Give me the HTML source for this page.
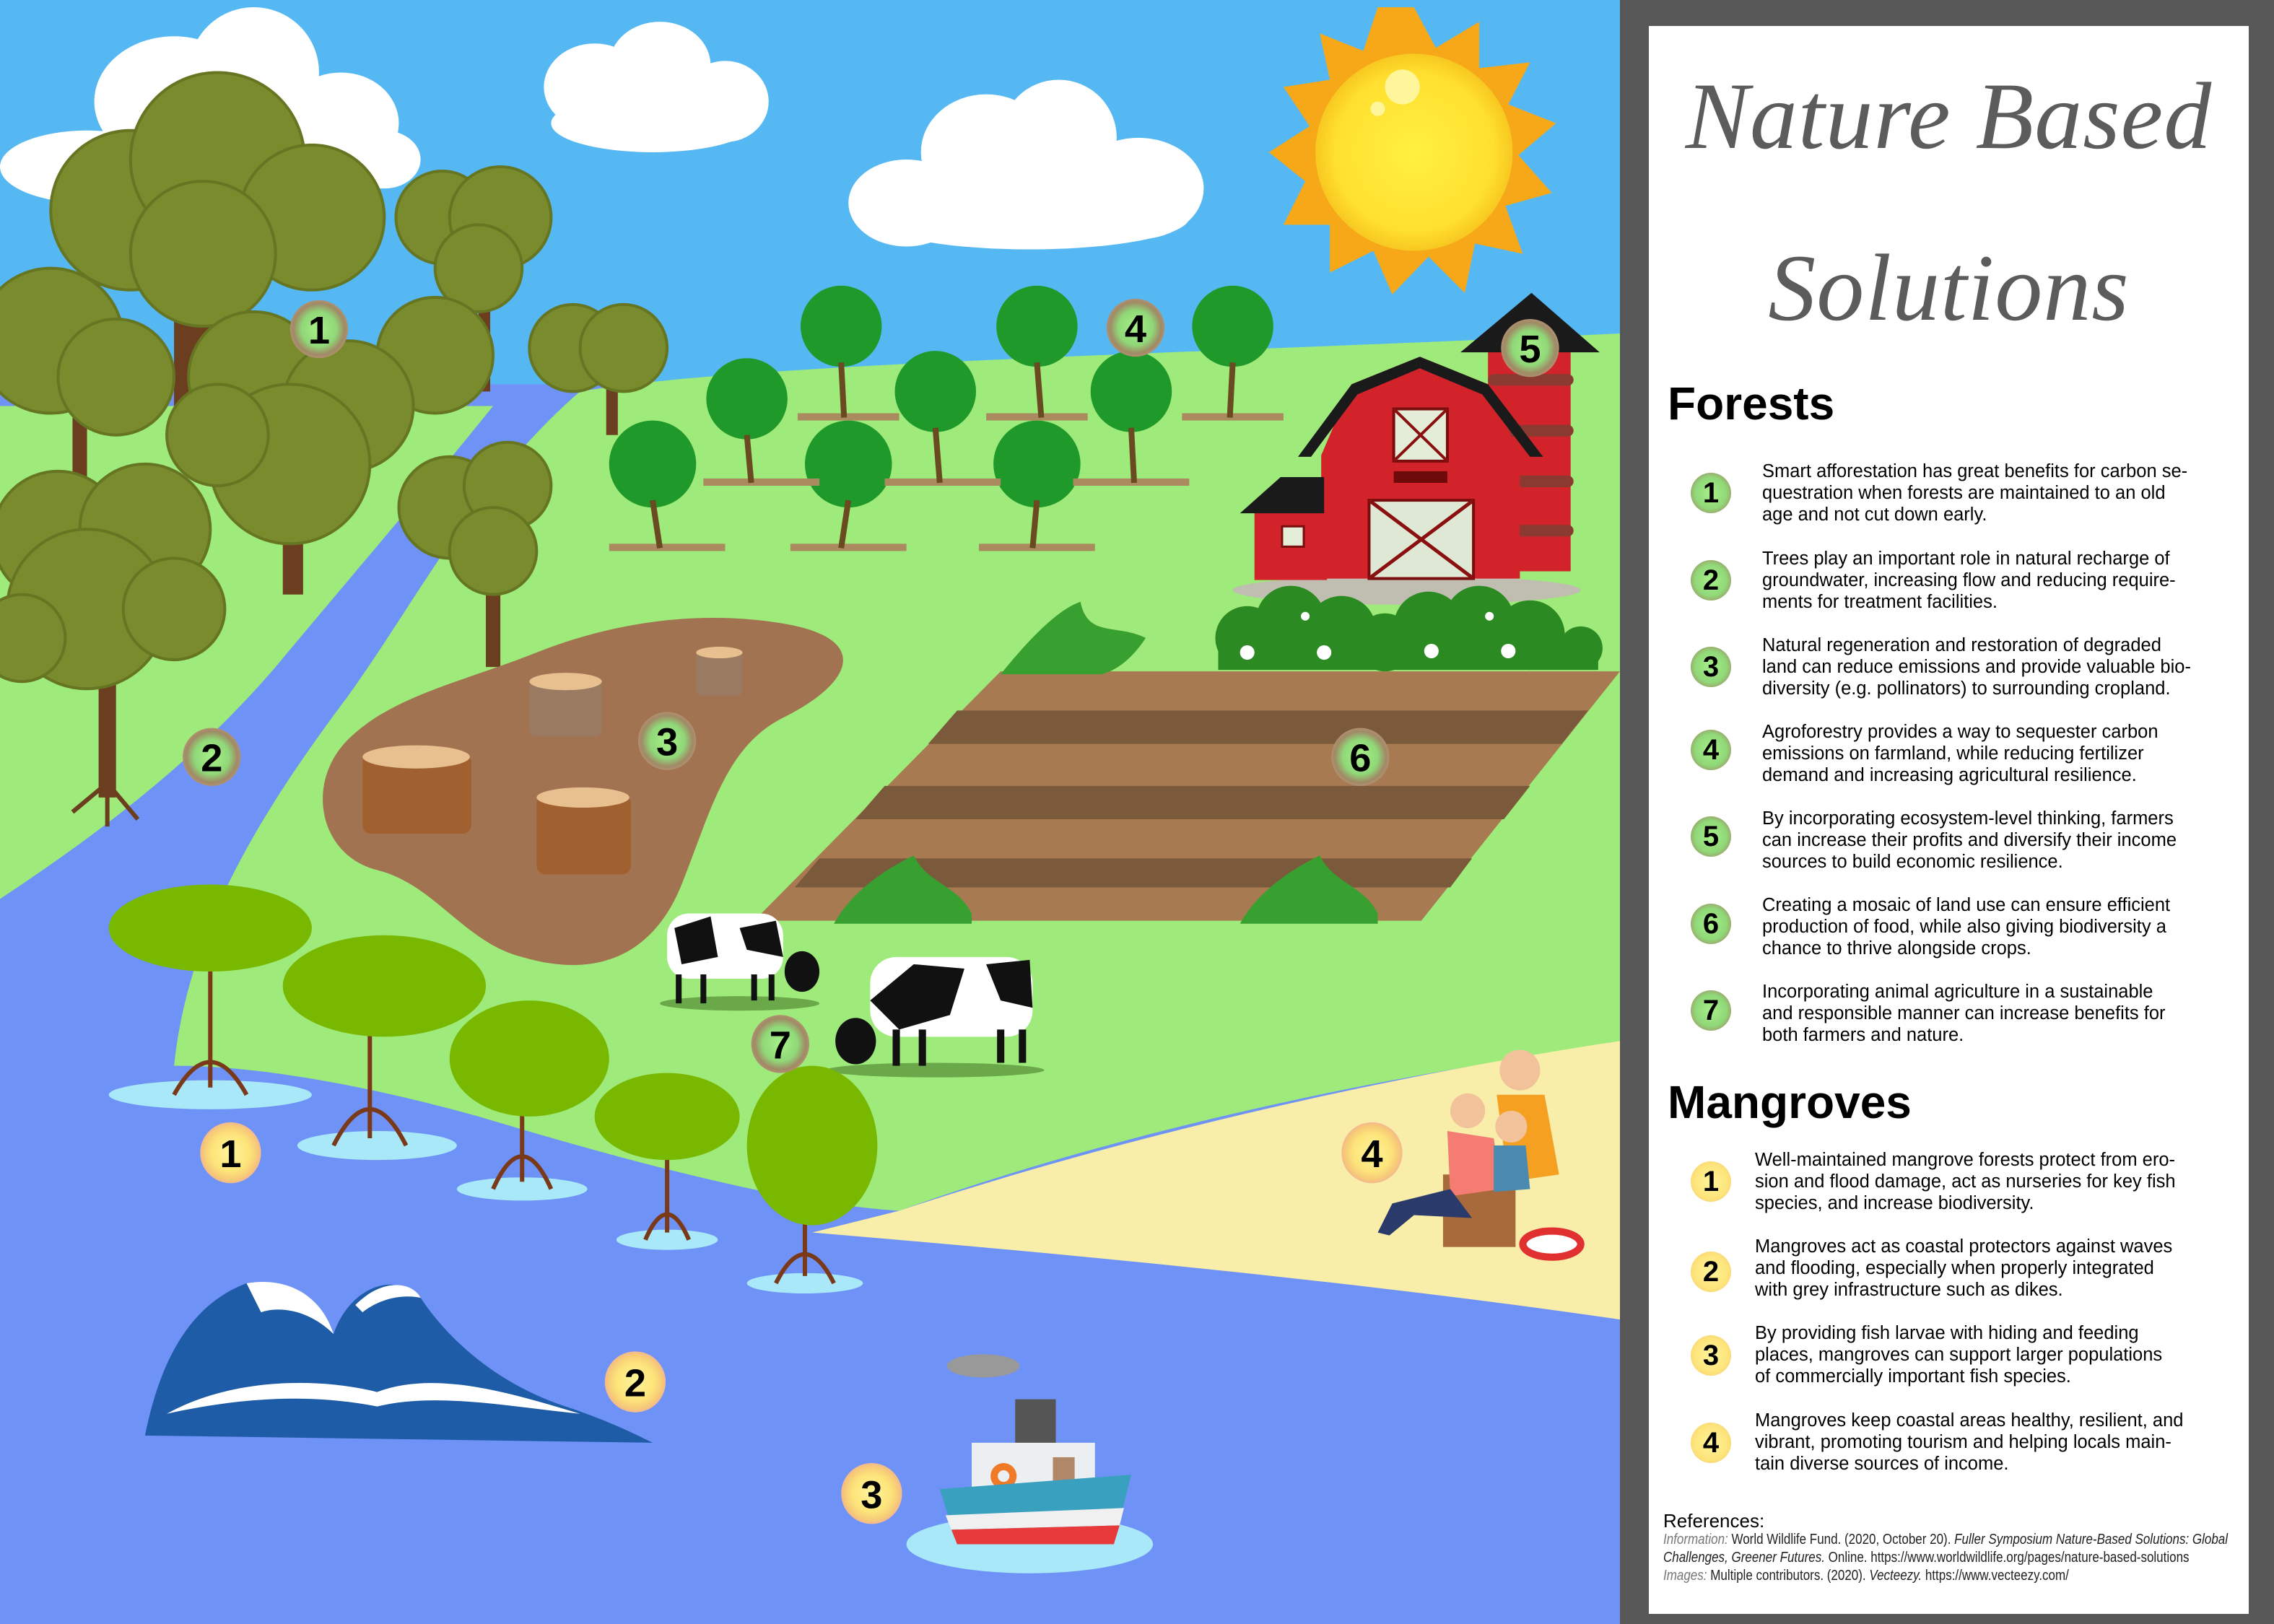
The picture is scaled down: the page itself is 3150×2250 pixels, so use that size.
<!DOCTYPE html>
<html><head><meta charset="utf-8">
<style>
html,body{margin:0;padding:0;}
body{width:3150px;height:2250px;position:relative;overflow:hidden;background:#575757;font-family:"Liberation Sans",sans-serif;}
#scene{position:absolute;left:0;top:0;}
#panel{position:absolute;left:2284px;top:36px;width:831px;height:2200px;background:#fff;overflow:hidden;}
.t{position:absolute;white-space:nowrap;}
.title{font-family:"Liberation Serif",serif;font-style:italic;color:#5c5c5c;font-size:132px;line-height:150px;left:0;width:831px;text-align:center;letter-spacing:1px;}
.h{font-weight:bold;color:#000;left:26px;line-height:70px;}
.it{left:157px;font-size:25.5px;line-height:30px;color:#000;}
.b{position:absolute;width:56px;height:56px;border-radius:50%;left:58px;font-weight:bold;font-size:40px;line-height:56px;text-align:center;color:#000;}
.g{background:radial-gradient(circle,#a8f088 0%,#90d878 55%,#a08a66 85%,#b09070 100%);}
.y{background:radial-gradient(circle,#fff49a 0%,#fde47a 60%,#f6c878 88%,#f3b890 100%);}
.ref{left:20px;font-size:20px;line-height:25px;color:#222;transform:scaleX(0.85);transform-origin:0 0;}
.ref i.l{color:#777;}
</style></head><body>
<svg id="scene" width="2244" height="2250" viewBox="0 0 1117 1120" preserveAspectRatio="none">
<defs>
<radialGradient id="gg"><stop offset="0" stop-color="#a8f088"/><stop offset="0.6" stop-color="#90d878"/><stop offset="0.88" stop-color="#a08a66"/><stop offset="1" stop-color="#b09070"/></radialGradient>
<radialGradient id="yg"><stop offset="0" stop-color="#fff49a"/><stop offset="0.62" stop-color="#fde47a"/><stop offset="0.9" stop-color="#f6c878"/><stop offset="1" stop-color="#f3b890"/></radialGradient>
<radialGradient id="sun"><stop offset="0" stop-color="#fff040"/><stop offset="0.8" stop-color="#ffe030"/><stop offset="1" stop-color="#f8c820"/></radialGradient>
</defs>
<rect width="1117" height="1120" fill="#55b8f2"/>
<g fill="#fff">
<ellipse cx="60" cy="115" rx="60" ry="25"/><ellipse cx="120" cy="70" rx="55" ry="45"/><ellipse cx="175" cy="50" rx="45" ry="45"/><ellipse cx="235" cy="85" rx="40" ry="35"/><ellipse cx="265" cy="110" rx="25" ry="20"/>
<ellipse cx="410" cy="60" rx="35" ry="30"/><ellipse cx="455" cy="45" rx="35" ry="30"/><ellipse cx="500" cy="70" rx="30" ry="28"/><ellipse cx="450" cy="85" rx="70" ry="20"/>
<ellipse cx="625" cy="140" rx="40" ry="30"/><ellipse cx="680" cy="105" rx="45" ry="40"/><ellipse cx="730" cy="95" rx="40" ry="40"/><ellipse cx="785" cy="130" rx="45" ry="35"/><ellipse cx="710" cy="150" rx="110" ry="22"/>
</g>
<g transform="translate(975,105)">
<polygon fill="#f6a818" points="0,-100 15,-72 45,-90 45,-58 80,-62 65,-33 98,-20 72,2 95,28 63,37 75,70 42,63 35,97 10,72 -15,98 -28,68 -58,83 -58,50 -90,50 -75,20 -100,0 -72,-18 -90,-45 -58,-50 -65,-82 -35,-70 -25,-100"/>
<circle r="68" fill="url(#sun)"/>
<circle cx="-8" cy="-45" r="12" fill="#fff59a"/><circle cx="-25" cy="-30" r="5" fill="#fff59a"/>
</g>
<rect y="265" width="1117" height="855" fill="#6f92f6"/>
<path fill="#9eea7a" d="M400,270 C520,250 800,245 1117,230 L1117,720 C1000,735 800,770 620,835 C540,830 430,800 330,770 C240,745 170,735 120,735 C130,640 180,560 240,480 C290,410 330,330 400,270 Z"/>
<path fill="#9eea7a" d="M0,280 L340,280 C300,330 240,400 190,460 C130,530 60,580 0,620 Z"/>
<path fill="#f8eeaa" d="M620,835 C800,775 1000,735 1117,718 L1117,910 C980,890 800,870 560,850 Z"/>
<g fill="#6a3e1e">
<rect x="120" y="150" width="30" height="140"/><rect x="195" y="290" width="14" height="120"/><rect x="330" y="200" width="8" height="70"/><rect x="50" y="260" width="10" height="80"/><rect x="335" y="380" width="10" height="80"/><rect x="68" y="400" width="12" height="150"/><rect x="418" y="250" width="8" height="50"/>
</g>
<g fill="#7a8b2e" stroke="#667522" stroke-width="2">
<circle cx="90" cy="145" r="55"/><circle cx="150" cy="110" r="60"/><circle cx="215" cy="150" r="50"/><circle cx="140" cy="175" r="50"/>
<circle cx="305" cy="150" r="32"/><circle cx="345" cy="150" r="35"/><circle cx="330" cy="185" r="30"/>
<circle cx="35" cy="235" r="50"/><circle cx="80" cy="260" r="40"/>
<circle cx="300" cy="245" r="40"/><circle cx="395" cy="240" r="30"/><circle cx="430" cy="240" r="30"/>
<circle cx="175" cy="260" r="45"/><circle cx="240" cy="280" r="45"/><circle cx="200" cy="320" r="55"/><circle cx="150" cy="300" r="35"/>
<circle cx="310" cy="350" r="35"/><circle cx="350" cy="335" r="30"/><circle cx="340" cy="380" r="30"/>
<circle cx="40" cy="370" r="45"/><circle cx="100" cy="365" r="45"/><circle cx="60" cy="420" r="55"/><circle cx="120" cy="420" r="35"/><circle cx="15" cy="440" r="30"/>
</g>
<path d="M74,540 L50,560 M74,540 L95,565 M74,545 L74,570" stroke="#6a3e1e" stroke-width="3" fill="none"/>
<g fill="#1f9a2a">
<circle cx="580" cy="225" r="28"/><circle cx="715" cy="225" r="28"/><circle cx="850" cy="225" r="28"/>
<circle cx="515" cy="275" r="28"/><circle cx="645" cy="270" r="28"/><circle cx="780" cy="270" r="28"/>
<circle cx="450" cy="320" r="30"/><circle cx="585" cy="320" r="30"/><circle cx="715" cy="320" r="30"/>
</g>
<g fill="#ab8a60"><rect x="420" y="375" width="80" height="5"/><rect x="545" y="375" width="80" height="5"/><rect x="675" y="375" width="80" height="5"/><rect x="485" y="330" width="80" height="5"/><rect x="610" y="330" width="80" height="5"/><rect x="740" y="330" width="80" height="5"/><rect x="550" y="285" width="70" height="5"/><rect x="680" y="285" width="70" height="5"/><rect x="815" y="285" width="70" height="5"/></g>
<g stroke="#6a4a20" stroke-width="4"><line x1="450" y1="345" x2="455" y2="378"/><line x1="585" y1="345" x2="580" y2="378"/><line x1="715" y1="345" x2="712" y2="378"/><line x1="515" y1="300" x2="518" y2="333"/><line x1="645" y1="295" x2="648" y2="333"/><line x1="780" y1="295" x2="782" y2="333"/><line x1="580" y1="250" x2="582" y2="288"/><line x1="715" y1="250" x2="718" y2="288"/><line x1="850" y1="250" x2="848" y2="288"/></g>
<path fill="#a27350" d="M370,450 C420,430 480,420 540,430 C600,440 590,470 540,495 C500,515 490,560 470,610 C450,660 410,675 360,660 C320,650 300,610 260,600 C220,590 210,540 240,510 C270,480 320,470 370,450 Z"/>
<g fill="#a06030"><rect x="250" y="520" width="75" height="55" rx="6"/><rect x="370" y="548" width="65" height="55" rx="6"/></g>
<g fill="#9a7a60"><rect x="365" y="468" width="50" height="40" rx="5"/><rect x="480" y="448" width="32" height="32" rx="4"/></g>
<g fill="#e8c090"><ellipse cx="287" cy="522" rx="37" ry="8"/><ellipse cx="402" cy="550" rx="32" ry="7"/><ellipse cx="390" cy="470" rx="25" ry="6"/><ellipse cx="496" cy="450" rx="16" ry="4"/></g>
<polygon fill="#a87a52" points="690,463 1117,463 980,635 520,635"/>
<g fill="#7b5a3c"><polygon points="660,490 1095,490 1077,513 640,513"/><polygon points="610,542 1055,542 1037,565 590,565"/><polygon points="565,592 1015,592 1000,612 548,612"/></g>
<g fill="#38a030"><path d="M690,465 C710,440 730,420 745,415 C750,440 770,430 790,440 C780,455 770,462 760,465 Z"/><path d="M575,637 C590,610 620,595 630,590 C640,610 660,610 670,630 L670,637 Z"/><path d="M855,637 C870,610 900,595 910,590 C920,610 940,610 950,630 L950,637 Z"/></g>
<ellipse cx="970" cy="407" rx="120" ry="10" fill="#c0beb0"/>
<rect x="1026" y="242" width="57" height="152" fill="#d2232a"/>
<g fill="#8a3a30"><rect x="1026" y="258" width="59" height="8" rx="4"/><rect x="1026" y="293" width="59" height="8" rx="4"/><rect x="1026" y="328" width="59" height="8" rx="4"/><rect x="1026" y="362" width="59" height="8" rx="4"/></g>
<polygon fill="#1a1a1a" points="1007,243 1056,202 1103,243"/>
<polygon fill="#d2232a" points="911,314 932,265 979,246 1026,265 1048,314 1048,399 911,399"/>
<polygon fill="#1a1a1a" points="895,315 932,265 979,246 1026,265 1064,315 1055,315 1022,272 979,254 936,272 904,315"/>
<rect x="961" y="282" width="37" height="36" fill="#e4edd8" stroke="#7a0d0d" stroke-width="2"/><path d="M961,282 L998,318 M998,282 L961,318" stroke="#8a1010" stroke-width="2"/>
<rect x="961" y="325" width="37" height="8" fill="#6e0a0a"/>
<rect x="944" y="345" width="72" height="54" fill="#dfe8d4" stroke="#7a0d0d" stroke-width="2"/><path d="M944,345 L1016,399 M1016,345 L944,399" stroke="#8a1010" stroke-width="2.5"/>
<rect x="865" y="353" width="50" height="47" fill="#d2232a"/><polygon fill="#1a1a1a" points="855,354 883,329 913,329 913,354"/>
<rect x="884" y="363" width="15" height="14" fill="#e4edd8" stroke="#7a0d0d" stroke-width="1.5"/>
<g fill="#2c8a22"><circle cx="860" cy="440" r="22"/><circle cx="890" cy="428" r="24"/><circle cx="925" cy="435" r="24"/><circle cx="955" cy="443" r="20"/><circle cx="985" cy="432" r="24"/><circle cx="1020" cy="428" r="24"/><circle cx="1055" cy="438" r="24"/><circle cx="1090" cy="447" r="15"/><rect x="840" y="440" width="262" height="22"/></g>
<g fill="#fff"><circle cx="860" cy="450" r="5"/><circle cx="913" cy="450" r="5"/><circle cx="987" cy="449" r="5"/><circle cx="1040" cy="449" r="5"/><circle cx="900" cy="425" r="3"/><circle cx="1027" cy="425" r="3"/></g>
<g><ellipse cx="510" cy="692" rx="55" ry="5" fill="#6aa84a"/><rect x="460" y="630" width="80" height="45" rx="15" fill="#fff"/><path d="M465,640 L490,632 L495,660 L470,665 Z M510,640 L535,635 L540,660 L515,655 Z" fill="#111"/><ellipse cx="553" cy="670" rx="12" ry="14" fill="#111"/><g stroke="#111" stroke-width="4"><line x1="468" y1="672" x2="468" y2="692"/><line x1="485" y1="672" x2="485" y2="692"/><line x1="520" y1="672" x2="520" y2="690"/><line x1="532" y1="672" x2="532" y2="690"/></g></g>
<g><ellipse cx="645" cy="738" rx="75" ry="5" fill="#6aa84a"/><rect x="600" y="660" width="112" height="55" rx="18" fill="#fff"/><path d="M600,690 L630,665 L665,668 L655,700 L620,710 Z M680,665 L710,662 L712,695 L690,690 Z" fill="#111"/><ellipse cx="590" cy="718" rx="14" ry="16" fill="#111"/><g stroke="#111" stroke-width="5"><line x1="618" y1="710" x2="618" y2="735"/><line x1="636" y1="710" x2="636" y2="735"/><line x1="690" y1="710" x2="690" y2="733"/><line x1="705" y1="710" x2="705" y2="733"/></g></g>
<g fill="#a8e8f8"><ellipse cx="145" cy="755" rx="70" ry="10"/><ellipse cx="260" cy="790" rx="55" ry="10"/><ellipse cx="360" cy="820" rx="45" ry="8"/><ellipse cx="460" cy="855" rx="35" ry="7"/><ellipse cx="555" cy="885" rx="40" ry="7"/></g>
<g stroke="#7a3a1a" stroke-width="3" fill="none"><path d="M145,660 L145,750 M120,755 Q145,710 170,755"/><path d="M255,700 L255,785 M230,790 Q255,740 280,790"/><path d="M360,745 L360,815 M340,820 Q360,775 380,820"/><path d="M460,790 L460,850 M445,855 Q460,820 475,855"/><path d="M555,835 L555,880 M535,885 Q555,845 575,885"/></g>
<g fill="#78b800"><ellipse cx="145" cy="640" rx="70" ry="30"/><ellipse cx="265" cy="680" rx="70" ry="35"/><ellipse cx="365" cy="730" rx="55" ry="40"/><ellipse cx="460" cy="770" rx="50" ry="30"/><ellipse cx="560" cy="790" rx="45" ry="55"/></g>
<path fill="#1e5ca8" d="M100,990 C110,940 130,900 170,885 C200,880 220,900 230,920 C240,890 270,875 290,895 C300,910 330,950 390,970 C420,980 440,990 450,995 Z"/>
<path fill="#fff" d="M170,885 C200,880 222,895 230,920 C215,905 195,900 180,905 Z M245,900 C265,880 285,885 290,895 C275,892 260,897 250,905 Z M115,975 C160,950 220,950 260,960 C300,945 350,960 400,975 C350,970 300,960 260,970 C210,960 160,965 115,975 Z"/>
<ellipse cx="710" cy="1065" rx="85" ry="20" fill="#a8e8f8"/>
<ellipse cx="678" cy="942" rx="25" ry="8" fill="#999"/>
<rect x="700" y="965" width="28" height="40" fill="#555"/>
<rect x="670" y="995" width="85" height="35" fill="#eceff2"/>
<circle cx="692" cy="1018" r="9" fill="#f07a28"/><circle cx="692" cy="1018" r="4" fill="#eceff2"/>
<rect x="726" y="1005" width="15" height="25" fill="#b08868"/>
<path d="M648,1027 L780,1017 L768,1065 L660,1065 Z" fill="#3aa0c0"/><path d="M652,1045 L775,1040 L772,1052 L656,1055 Z" fill="#f0f0f0"/><path d="M656,1055 L772,1052 L768,1065 L660,1065 Z" fill="#e83a3a"/>
<rect x="995" y="810" width="50" height="50" fill="#a86a3a"/>
<circle cx="1048" cy="738" r="14" fill="#f2c29a"/><path d="M1032,755 L1065,755 L1075,810 L1040,815 Z" fill="#f5a020"/>
<circle cx="1012" cy="766" r="12" fill="#f2c29a"/><path d="M998,780 L1030,785 L1035,820 L1000,825 Z" fill="#f47c72"/><path d="M1000,820 L960,830 L950,850 L958,852 L975,838 L1015,840 Z" fill="#2a3a6a"/>
<circle cx="1042" cy="777" r="11" fill="#f2c29a"/><path d="M1030,790 L1052,790 L1055,820 L1030,822 Z" fill="#4a8ab0"/>
<ellipse cx="1070" cy="858" rx="20" ry="9" fill="#fff" stroke="#e03030" stroke-width="5"/>
<g font-family="Liberation Sans,sans-serif" font-weight="bold" font-size="27" text-anchor="middle">
<g><circle cx="220" cy="227" r="20" fill="url(#gg)"/><text x="220" y="237">1</text></g>
<g><circle cx="146" cy="522" r="20" fill="url(#gg)"/><text x="146" y="532">2</text></g>
<g><circle cx="460" cy="511" r="20" fill="url(#gg)"/><text x="460" y="521">3</text></g>
<g><circle cx="783" cy="226" r="20" fill="url(#gg)"/><text x="783" y="236">4</text></g>
<g><circle cx="1055" cy="240" r="20" fill="url(#gg)"/><text x="1055" y="250">5</text></g>
<g><circle cx="938" cy="522" r="20" fill="url(#gg)"/><text x="938" y="532">6</text></g>
<g><circle cx="538" cy="720" r="20" fill="url(#gg)"/><text x="538" y="730">7</text></g>
<g><circle cx="159" cy="795" r="21" fill="url(#yg)"/><text x="159" y="805">1</text></g>
<g><circle cx="438" cy="953" r="21" fill="url(#yg)"/><text x="438" y="963">2</text></g>
<g><circle cx="601" cy="1030" r="21" fill="url(#yg)"/><text x="601" y="1040">3</text></g>
<g><circle cx="946" cy="795" r="21" fill="url(#yg)"/><text x="946" y="805">4</text></g>
</g>
</svg>
<div id="panel">
<div class="t title" style="top:50px;">Nature Based</div>
<div class="t title" style="top:288px;">Solutions</div>
<div class="t h" style="top:488px;font-size:64px;">Forests</div>

<div class="b g" style="top:619px;">1</div>
<div class="t it" style="top:602px;">Smart afforestation has great benefits for carbon se-<br>questration when forests are maintained to an old<br>age and not cut down early.</div>
<div class="b g" style="top:740px;">2</div>
<div class="t it" style="top:723px;">Trees play an important role in natural recharge of<br>groundwater, increasing flow and reducing require-<br>ments for treatment facilities.</div>
<div class="b g" style="top:860px;">3</div>
<div class="t it" style="top:843px;">Natural regeneration and restoration of degraded<br>land can reduce emissions and provide valuable bio-<br>diversity (e.g. pollinators) to surrounding cropland.</div>
<div class="b g" style="top:975px;">4</div>
<div class="t it" style="top:963px;">Agroforestry provides a way to sequester carbon<br>emissions on farmland, while reducing fertilizer<br>demand and increasing agricultural resilience.</div>
<div class="b g" style="top:1095px;">5</div>
<div class="t it" style="top:1083px;">By incorporating ecosystem-level thinking, farmers<br>can increase their profits and diversify their income<br>sources to build economic resilience.</div>
<div class="b g" style="top:1216px;">6</div>
<div class="t it" style="top:1203px;">Creating a mosaic of land use can ensure efficient<br>production of food, while also giving biodiversity a<br>chance to thrive alongside crops.</div>
<div class="b g" style="top:1336px;">7</div>
<div class="t it" style="top:1323px;">Incorporating animal agriculture in a sustainable<br>and responsible manner can increase benefits for<br>both farmers and nature.</div>

<div class="t h" style="top:1456px;font-size:64px;">Mangroves</div>
<div class="b y" style="top:1573px;">1</div>
<div class="t it" style="top:1556px;left:147px;">Well-maintained mangrove forests protect from ero-<br>sion and flood damage, act as nurseries for key fish<br>species, and increase biodiversity.</div>
<div class="b y" style="top:1698px;">2</div>
<div class="t it" style="top:1676px;left:147px;">Mangroves act as coastal protectors against waves<br>and flooding, especially when properly integrated<br>with grey infrastructure such as dikes.</div>
<div class="b y" style="top:1814px;">3</div>
<div class="t it" style="top:1796px;left:147px;">By providing fish larvae with hiding and feeding<br>places, mangroves can support larger populations<br>of commercially important fish species.</div>
<div class="b y" style="top:1935px;">4</div>
<div class="t it" style="top:1917px;left:147px;">Mangroves keep coastal areas healthy, resilient, and<br>vibrant, promoting tourism and helping locals main-<br>tain diverse sources of income.</div>

<div class="t" style="left:20px;top:2056px;font-size:26px;color:#000;">References:</div>
<div class="t ref" style="top:2085px;"><i class="l">Information:</i> World Wildlife Fund. (2020, October 20). <i>Fuller Symposium Nature-Based Solutions: Global</i><br><i>Challenges, Greener Futures.</i> Online. https://www.worldwildlife.org/pages/nature-based-solutions<br><i class="l">Images:</i> Multiple contributors. (2020). <i>Vecteezy.</i> https://www.vecteezy.com/</div>
</div>
</body></html>
